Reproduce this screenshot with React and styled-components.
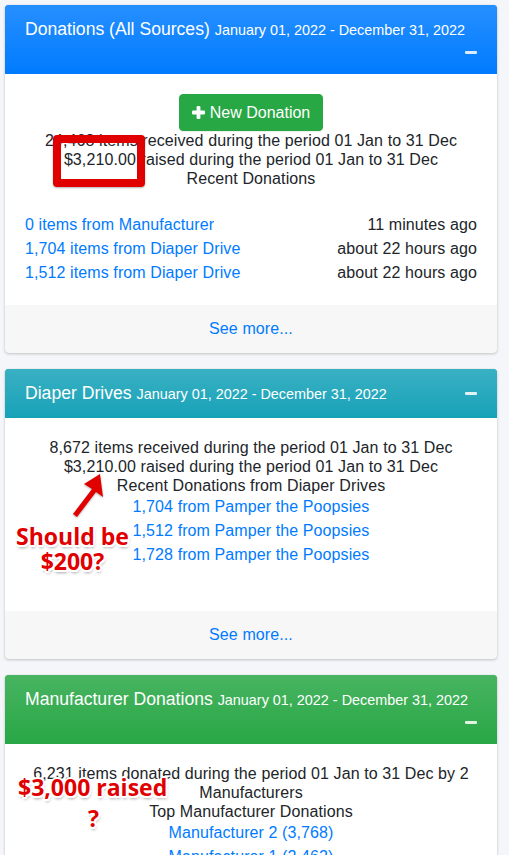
import React from "react";
import styled, { createGlobalStyle } from "styled-components";

const recent = [
  { label: "0 items from Manufacturer", when: "11 minutes ago" },
  { label: "1,704 items from Diaper Drive", when: "about 22 hours ago" },
  { label: "1,512 items from Diaper Drive", when: "about 22 hours ago" },
];

const drives = [
  "1,704 from Pamper the Poopsies",
  "1,512 from Pamper the Poopsies",
  "1,728 from Pamper the Poopsies",
];

const makers = ["Manufacturer 2 (3,768)", "Manufacturer 1 (2,462)"];

function Minus() {
  return (
    <Tool>
      <ToolBar />
    </Tool>
  );
}

function App() {
  return (
    <Page>
      <GlobalStyle />

      <Card>
        <Header tone="primary">
          <Title>
            Donations (All Sources) <DateRange>January 01, 2022 - December 31, 2022</DateRange>
          </Title>
          <Minus />
        </Header>
        <Body>
          <Center>
            <Button>
              <svg width="13" height="13" viewBox="0 0 13 13">
                <rect x="4.6" y="0" width="3.8" height="13" rx="1" fill="#fff" />
                <rect x="0" y="4.6" width="13" height="3.8" rx="1" fill="#fff" />
              </svg>
              New Donation
            </Button>
          </Center>
          <Summary>
            24,468 items received during the period 01 Jan to 31 Dec
            <br />
            $3,210.00 raised during the period 01 Jan to 31 Dec
            <br />
            Recent Donations
          </Summary>
          <RecentList>
            {recent.map((r) => (
              <RecentRow key={r.label}>
                <Link href="#">{r.label}</Link>
                <span>{r.when}</span>
              </RecentRow>
            ))}
          </RecentList>
        </Body>
        <Footer>
          <Link href="#">See more...</Link>
        </Footer>
      </Card>

      <Card>
        <Header tone="info">
          <Title>
            Diaper Drives <DateRange>January 01, 2022 - December 31, 2022</DateRange>
          </Title>
          <Minus />
        </Header>
        <Body>
          <Summary>
            8,672 items received during the period 01 Jan to 31 Dec
            <br />
            $3,210.00 raised during the period 01 Jan to 31 Dec
            <br />
            Recent Donations from Diaper Drives
          </Summary>
          <LinkList>
            {drives.map((d) => (
              <Link key={d} href="#">
                {d}
              </Link>
            ))}
          </LinkList>
          <Spacer />
        </Body>
        <Footer>
          <Link href="#">See more...</Link>
        </Footer>
      </Card>

      <Card>
        <Header tone="success">
          <Title>
            Manufacturer Donations <DateRange>January 01, 2022 - December 31, 2022</DateRange>
          </Title>
          <Minus />
        </Header>
        <Body>
          <Summary>
            6,231 items donated during the period 01 Jan to 31 Dec by 2 Manufacturers
            <br />
            Top Manufacturer Donations
          </Summary>
          <LinkList>
            {makers.map((m) => (
              <Link key={m} href="#">
                {m}
              </Link>
            ))}
          </LinkList>
        </Body>
      </Card>

      {/* markup layered over the screenshot */}
      <RedBox />
      <Arrow width="40" height="46" viewBox="0 0 40 46">
        <polygon points="30,1 33,24 26,19 7,44 3,41 22,16 14,11" fill="#e00000" />
      </Arrow>
      <Note style={{ left: 16, top: 524 }}>
        Should be
        <br />
        $200?
      </Note>
      <Note style={{ left: 18, top: 775 }}>$3,000 raised</Note>
      <Note style={{ left: 88, top: 806 }}>?</Note>
    </Page>
  );
}

const GlobalStyle = createGlobalStyle`
  body {
    margin: 0;
    background: #f4f6f9;
    font-family: "Liberation Sans", Arial, sans-serif;
    font-size: 16px;
    letter-spacing: 0.1px;
    color: #212529;
  }
`;

const Page = styled.div`
  position: relative;
  padding: 5px 12px 0 5px;
  height: 850px;
  overflow: hidden;
`;

const Card = styled.div`
  background: #fff;
  border-radius: 4px;
  box-shadow: 0 0 1px rgba(0, 0, 0, 0.125), 0 1px 3px rgba(0, 0, 0, 0.2);
  margin-bottom: 16px;
  overflow: hidden;
`;

const gradients = {
  primary: "#007bff linear-gradient(180deg, #268fff, #007bff)",
  info: "#17a2b8 linear-gradient(180deg, #3ab0c3, #17a2b8)",
  success: "#28a745 linear-gradient(180deg, #48b461, #28a745)",
};

const Header = styled.div`
  display: flex;
  flex-wrap: wrap;
  align-items: center;
  justify-content: space-between;
  padding: 12px 20px;
  color: #fff;
  background: ${(p) => gradients[p.tone]};
`;

const Title = styled.div`
  font-size: 17.6px;
  line-height: 24px;
  letter-spacing: 0;
`;

const DateRange = styled.span`
  font-size: 14.4px;
`;

const Tool = styled.div`
  margin-left: auto;
  height: 20px;
  width: 26px;
  display: flex;
  align-items: center;
  justify-content: flex-end;
`;

const ToolBar = styled.div`
  width: 12px;
  height: 3px;
  border-radius: 1px;
  background: rgba(255, 255, 255, 0.85);
`;

const Body = styled.div`
  padding: 20px;
`;

const Center = styled.div`
  text-align: center;
`;

const Button = styled.button`
  display: inline-flex;
  align-items: center;
  gap: 5px;
  height: 37px;
  padding: 0 12px;
  border: 1px solid #28a745;
  border-radius: 4px;
  background: #28a745;
  color: #fff;
  font: inherit;
  font-size: 16px;
  box-shadow: 0 1px 1px rgba(0, 0, 0, 0.075);
`;

const Summary = styled.div`
  text-align: center;
  line-height: 19px;
`;

const RecentList = styled.div`
  margin-top: 25px;
  line-height: 24px;
`;

const RecentRow = styled.div`
  display: flex;
  justify-content: space-between;
`;

const LinkList = styled.div`
  display: flex;
  flex-direction: column;
  align-items: center;
  line-height: 24px;
`;

const Spacer = styled.div`
  height: 24px;
`;

const Link = styled.a`
  color: #007bff;
  text-decoration: none;
`;

const Footer = styled.div`
  padding: 12px 20px;
  line-height: 24px;
  text-align: center;
  background: rgba(0, 0, 0, 0.03);
`;

const RedBox = styled.div`
  position: absolute;
  left: 53px;
  top: 135px;
  width: 92px;
  height: 52px;
  box-sizing: border-box;
  border: 8px solid #e00000;
  border-radius: 4px;
  box-shadow: 0 1px 2px rgba(0, 0, 0, 0.3);
`;

const Arrow = styled.svg`
  position: absolute;
  left: 70px;
  top: 473px;
  filter: drop-shadow(0 1px 1px rgba(0, 0, 0, 0.3));
`;

const Note = styled.div`
  position: absolute;
  font-family: "Open Sans", sans-serif;
  font-weight: 700;
  font-size: 23px;
  line-height: 25px;
  letter-spacing: 0;
  text-align: center;
  color: #e00000;
  text-shadow: -2px 0 #fff, 2px 0 #fff, 0 -2px #fff, 0 2px #fff, -1.5px -1.5px #fff,
    1.5px -1.5px #fff, -1.5px 1.5px #fff, 1.5px 1.5px #fff, 1px 3px 3px rgba(0, 0, 0, 0.35);
`;

export default App;
